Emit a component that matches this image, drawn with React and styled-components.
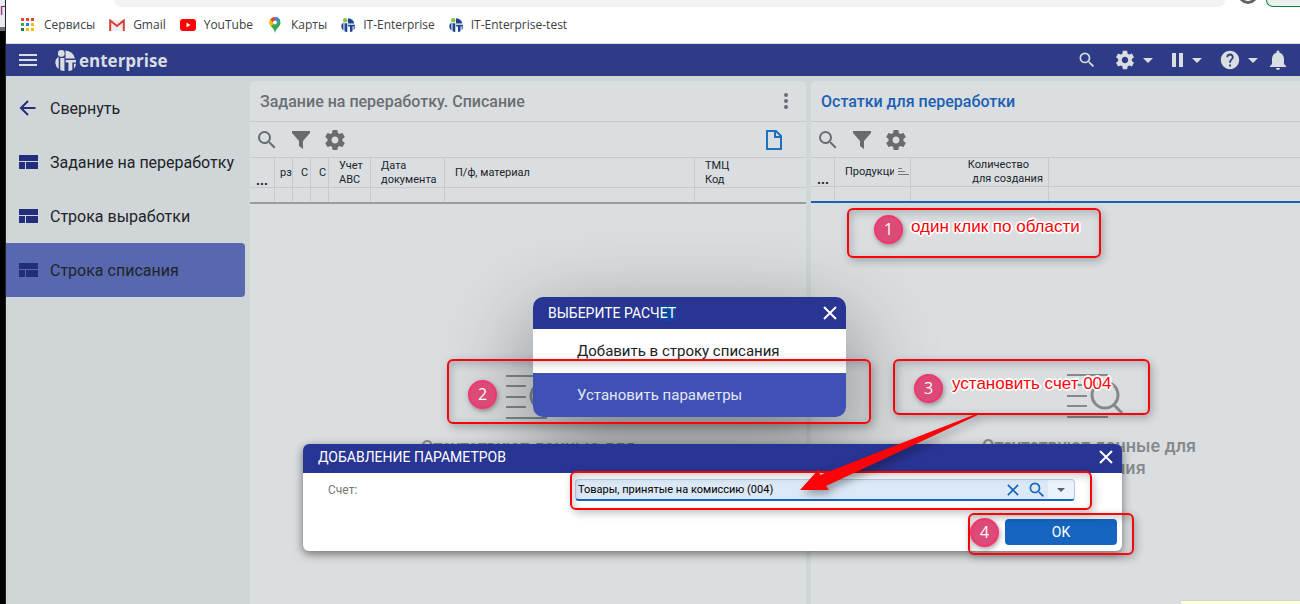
import React from "react";
import styled, { createGlobalStyle, css } from "styled-components";

const GlobalStyle = createGlobalStyle`
  * { box-sizing: border-box; }
  body { margin: 0; font-family: Roboto, "Liberation Sans", sans-serif; background: #d0d5d8; overflow: hidden; }
  button { font-family: inherit; border: 0; padding: 0; background: none; cursor: pointer; }
`;

const Screen = styled.div`
  position: relative;
  display: flex;
  min-height: 100vh;
  overflow: hidden;
`;

const DesktopEdge = styled.div`
  flex: none;
  width: 6px;
  background: #000;
  border-right: 1px solid #222;
`;

const DesktopWindow = styled.div`
  height: 31px;
  overflow: hidden;
  padding-top: 3px;
  background: #e8ebef;
  border-bottom: 4px solid #6b6b6b;
  font: 12px/16px "Liberation Sans", sans-serif;
  color: #7a1f7a;
`;

const BrowserWindow = styled.div`
  flex: 1;
  min-width: 0;
  display: flex;
  flex-direction: column;
`;

const AddressRow = styled.div`
  display: flex;
  height: 7px;
  background: #fff;
  padding-left: 108px;
  overflow: hidden;
`;

const AddressBar = styled.div`
  flex: 1;
  background: #f1f3f4;
  border-radius: 0 0 14px 14px;
`;

const Avatar = styled.div`
  width: 20px;
  height: 20px;
  margin: -16px 8px 0 13px;
  border: 3px solid #5f6368;
  border-radius: 50%;
`;

const UpdateChip = styled.div`
  width: 34px;
  border: 1px solid #188038;
  border-width: 0 0 1px 1px;
  border-radius: 0 0 0 14px;
  background: #e9f2ec;
`;

const Bookmarks = styled.nav`
  display: flex;
  gap: 14px;
  align-items: center;
  height: 37px;
  padding: 0 14px;
  background: #fff;
  border-bottom: 1px solid #dadce0;
`;

const Bookmark = styled.a`
  display: flex;
  align-items: center;
  gap: 8px;
  font: 12px/16px "Open Sans", sans-serif;
  color: #3c4043;
  text-decoration: none;
`;

const AppBar = styled.header`
  display: flex;
  align-items: center;
  height: 32px;
  padding: 0 14px 0 12px;
  background: #2e3b87;
  color: #dadee1;
`;

const IconButton = styled.button`
  display: flex;
  align-items: center;
  color: inherit;
`;

const MenuButton = styled(IconButton)`
  gap: 7px;
  padding-left: 5px;
`;

const Brand = styled.a`
  display: flex;
  align-items: center;
  gap: 3px;
  margin-left: 17px;
  color: inherit;
  text-decoration: none;
  font: 700 17px/24px "Open Sans", sans-serif;
`;

const BrandName = styled.span`
  padding-top: 2px;
`;

const AppActions = styled.div`
  display: flex;
  align-items: center;
  gap: 12px;
  margin-left: auto;
`;

const Body = styled.div`
  flex: 1;
  display: flex;
  padding-top: 5px;
  background: #d0d5d8;
  overflow: hidden;
`;

const Sidebar = styled.nav`
  flex: none;
  width: 244px;
  padding-right: 5px;
`;

const NavItem = styled.a`
  display: flex;
  align-items: center;
  gap: 12px;
  height: 54px;
  padding-left: 12px;
  border-radius: 0 4px 4px 0;
  font-size: 16px;
  line-height: 20px;
  white-space: nowrap;
  color: #202429;
  text-decoration: none;
  background: ${(p) => (p.$active ? "#5868af" : "none")};
`;

const NavLabel = styled.span`
  padding-top: 2px;
`;

const Panels = styled.main`
  flex: 1;
  display: flex;
  gap: 5px;
  margin-right: -67px;
`;

const Panel = styled.section`
  flex: 1;
  min-width: 0;
  display: flex;
  flex-direction: column;
  background: #dadee1;
  border-radius: 5px 5px 0 0;
`;

const PanelHead = styled.div`
  display: flex;
  align-items: center;
  justify-content: space-between;
  height: 41px;
  padding: 0 10px;
  border-bottom: 1px solid #c6cacd;
`;

const PanelTitle = styled.h2`
  margin: 0;
  padding-top: 2px;
  font-size: 16px;
  line-height: 20px;
  font-weight: 500;
  color: ${(p) => (p.$active ? "#1c60b2" : "#6a6f72")};
`;

const Toolbar = styled.div`
  display: flex;
  align-items: center;
  gap: 10px;
  height: 35px;
  padding: 0 24px 0 5px;
  color: #686c6f;
`;

const NewDocument = styled(IconButton)`
  margin-left: auto;
  color: #1e70c0;
`;

const Grid = styled.table`
  table-layout: fixed;
  width: 100%;
  border-collapse: separate;
  border-spacing: 0;
  border-bottom: 2px solid ${(p) => (p.$active ? "#1c60b2" : "#999d9f")};
`;

const cell = css`
  padding: 0;
  border-top: 1px solid #c6cacd;
  border-right: 1px solid #c6cacd;
  &:last-child { border-right: 0; }
`;

const HeadCell = styled.th`
  ${cell}
  height: ${(p) => (p.$low ? 29 : 30)}px;
  padding-top: ${(p) => (p.$low ? 0 : 1)}px;
  padding-left: ${(p) => p.$pad ?? 10}px;
  font-size: 11px;
  line-height: 14px;
  font-weight: 400;
  text-align: left;
  white-space: nowrap;
  overflow: hidden;
  color: #202429;
`;

const Dots = styled.b`
  display: block;
  padding-top: 14px;
  font-size: 14px;
`;

const SortLabel = styled.span`
  display: flex;
  align-items: center;
  gap: 3px;
`;

const ClippedText = styled.span`
  width: 49px;
  overflow: hidden;
`;

const Quantity = styled.span`
  display: block;
  padding-right: 5px;
  text-align: right;
`;

const QuantityTop = styled.span`
  display: block;
  padding-right: 14px;
`;

const FilterCell = styled.td`
  ${cell}
  height: 15px;
`;

const Empty = styled.div`
  display: flex;
  flex-direction: column;
  align-items: center;
  gap: 17px;
  padding-top: 171px;
  font-size: 18px;
  line-height: 22px;
  font-weight: 500;
  text-align: center;
  color: #85898b;
`;

const EmptyDrawing = styled.svg`
  overflow: visible;
`;

const Menu = styled.div`
  position: absolute;
  left: 533px;
  top: 297px;
  width: 313px;
  border-radius: 10px;
  box-shadow: 0 30px 90px rgba(0, 0, 0, 0.45);
`;

const DialogTitle = styled.header`
  display: flex;
  align-items: center;
  justify-content: space-between;
  height: ${(p) => p.$height}px;
  padding: 0 9px ${(p) => p.$lift ?? 0}px 15px;
  border-radius: ${(p) => p.$radius}px ${(p) => p.$radius}px 0 0;
  background: #283593;
  color: #fff;
  font-size: 14px;
  line-height: 18px;
`;

const Selected = styled.span`
  background: #0d47a1;
`;

const MenuItem = styled.button`
  display: block;
  width: 100%;
  height: 44px;
  padding-left: 44px;
  font-size: 15px;
  line-height: 20px;
  text-align: left;
  color: ${(p) => (p.$active ? "#e4e7f5" : "#202124")};
  background: ${(p) => (p.$active ? "#3f51b5" : "#fff")};
  border-radius: ${(p) => (p.$active ? "0 0 10px 10px" : "0")};
`;

const Dialog = styled.form`
  position: absolute;
  left: 303px;
  top: 444px;
  width: 819px;
  height: 107px;
  border-radius: 6px;
  background: #fff;
  box-shadow: 0 3px 10px rgba(0, 0, 0, 0.5);
`;

const Field = styled.div`
  display: flex;
  align-items: center;
  justify-content: space-between;
  height: 34px;
  padding: 0 47px 0 25px;
`;

const FieldLabel = styled.label`
  font-size: 12px;
  line-height: 16px;
  color: #757575;
`;

const Combo = styled.div`
  display: flex;
  align-items: center;
  width: 500px;
  height: 22px;
  border: 1px solid #b3cae6;
  border-bottom: 2px solid #1565c0;
  border-radius: 4px;
  background: #dbe8f6;
  color: #1565c0;
  overflow: hidden;
`;

const ComboInput = styled.input`
  flex: 1;
  min-width: 0;
  border: 0;
  outline: 0;
  padding: 0 2px;
  background: none;
  font: 11px/16px Roboto, "Liberation Sans", sans-serif;
  color: #000;
`;

const ComboTools = styled.div`
  display: flex;
  align-items: center;
  gap: 8px;
  padding-right: 1px;
`;

const ComboDrop = styled(IconButton)`
  width: 26px;
  height: 20px;
  justify-content: center;
  background: #eaf2fa;
  color: #616161;
`;

const Footer = styled.div`
  display: flex;
  justify-content: flex-end;
  padding: 12px 5px 0;
`;

const OkButton = styled.button`
  width: 112px;
  height: 26px;
  border-radius: 4px;
  background: #1565c0;
  color: #fff;
  font-size: 14px;
`;

const Callout = styled.div`
  position: absolute;
  left: ${(p) => p.$x}px;
  top: ${(p) => p.$y}px;
  width: ${(p) => p.$w}px;
  height: ${(p) => p.$h}px;
  border: 2px solid #fb0307;
  border-radius: 6px;
  box-shadow: 2px 3px 8px rgba(0, 0, 0, 0.25), inset 2px 3px 8px rgba(0, 0, 0, 0.2);
  pointer-events: none;
`;

const Badge = styled.span`
  position: absolute;
  left: ${(p) => p.$x}px;
  top: ${(p) => p.$y}px;
  width: 29px;
  height: 29px;
  border: 2px solid #f5356f;
  border-radius: 50%;
  background: #dc4a77;
  box-shadow: 1px 2px 5px rgba(0, 0, 0, 0.35);
  color: #fff;
  font: 16px/25px "Open Sans", sans-serif;
  text-align: center;
`;

const Note = styled.span`
  position: absolute;
  left: ${(p) => p.$x}px;
  top: ${(p) => p.$y}px;
  font: 17px/20px "Liberation Sans", sans-serif;
  white-space: nowrap;
  color: #fb0307;
  text-shadow: 2px 0 #fff, -2px 0 #fff, 0 2px #fff, 0 -2px #fff, 1px 1px #fff, -1px -1px #fff, 1px -1px #fff, -1px 1px #fff;
`;

const Arrow = styled.svg`
  position: absolute;
  left: 796px;
  top: 408px;
  filter: drop-shadow(3px 4px 4px rgba(0, 0, 0, 0.35));
  pointer-events: none;
`;

const Hint = styled.div`
  position: absolute;
  right: 0;
  bottom: 0;
  width: 119px;
  height: 4px;
  border-top: 1px solid #d5d5cb;
  background: #ffffe1;
`;

const Glyph = ({ size = 24, d }) => (
  <svg width={size} height={size} viewBox="0 0 24 24" fill="currentColor">
    <path d={d} />
  </svg>
);

const paths = {
  search: "M15.5 14h-.79l-.28-.27A6.471 6.471 0 0 0 16 9.5 6.5 6.5 0 1 0 9.5 16c1.61 0 3.09-.59 4.23-1.57l.27.28v.79l5 4.99L20.49 19l-4.99-5zm-6 0C7.01 14 5 11.99 5 9.5S7.01 5 9.5 5 14 7.01 14 9.5 11.99 14 9.5 14z",
  gear: "M19.43 12.98c.04-.32.07-.64.07-.98s-.03-.66-.07-.98l2.11-1.65c.19-.15.24-.42.12-.64l-2-3.46c-.12-.22-.39-.3-.61-.22l-2.49 1c-.52-.4-1.08-.73-1.69-.98l-.38-2.65A.488.488 0 0 0 14 2h-4c-.25 0-.46.18-.49.42l-.38 2.65c-.61.25-1.17.59-1.69.98l-2.49-1c-.23-.09-.49 0-.61.22l-2 3.46c-.13.22-.07.49.12.64l2.11 1.65c-.04.32-.07.65-.07.98s.03.66.07.98l-2.11 1.65c-.19.15-.24.42-.12.64l2 3.46c.12.22.39.3.61.22l2.49-1c.52.4 1.08.73 1.69.98l.38 2.65c.03.24.24.42.49.42h4c.25 0 .46-.18.49-.42l.38-2.65c.61-.25 1.17-.59 1.69-.98l2.49 1c.23.09.49 0 .61-.22l2-3.46c.12-.22.07-.49-.12-.64l-2.11-1.65zM12 15.5c-1.93 0-3.5-1.57-3.5-3.5s1.57-3.5 3.5-3.5 3.5 1.57 3.5 3.5-1.57 3.5-3.5 3.5z",
  filter: "M3 3h18v2l-7 8v8l-4-3v-5L3 5z",
  help: "M12 2C6.48 2 2 6.48 2 12s4.48 10 10 10 10-4.48 10-10S17.52 2 12 2zm1 17h-2v-2h2v2zm2.07-7.75l-.9.92C13.45 12.9 13 13.5 13 15h-2v-.5c0-1.1.45-2.1 1.17-2.83l1.24-1.26c.37-.36.59-.86.59-1.41 0-1.1-.9-2-2-2s-2 .9-2 2H8c0-2.21 1.79-4 4-4s4 1.79 4 4c0 .88-.36 1.68-.93 2.25z",
  bell: "M12 22c1.1 0 2-.9 2-2h-4c0 1.1.89 2 2 2zm6-6v-5c0-3.07-1.64-5.64-4.5-6.32V4c0-.83-.67-1.5-1.5-1.5s-1.5.67-1.5 1.5v.68C7.63 5.36 6 7.92 6 11v5l-2 2v1h16v-1l-2-2z",
};

const Caret = ({ w = 10 }) => (
  <svg width={w} height={w / 2} viewBox="0 0 10 5" fill="currentColor"><path d="M0 0h10L5 5z" /></svg>
);

const Cross = ({ size = 14 }) => (
  <svg width={size} height={size} viewBox="0 0 14 14" stroke="currentColor" strokeWidth="2" fill="none">
    <path d="M1 1l12 12M13 1L1 13" />
  </svg>
);

const Mark = ({ size, dot, fill }) => (
  <svg width={size} height={size} viewBox="0 0 20 20">
    <g fill={fill}>
      <path d="M10 .5A9.500 9.500 0 0 1 19 8H10z" />
      <path d="M3.500 6.500V18Q.8 16 .4 12.500Q0 8.500 3.500 6.500z" />
      <path d="M5 7.500h4V20Q6.500 20 5 19z" />
      <path d="M10.200 9.500H20V12H16.500V19Q15 20 12.800 20V12H10.200z" />
      <path d="M18 13h2q-.3 3-2 4.500z" />
    </g>
    <circle cx="6" cy="3.300" r="3.200" fill={dot} />
  </svg>
);

const AppsIcon = () => {
  const colors = ["#ea4335", "#ea4335", "#ea4335", "#34a853", "#1a84e8", "#fbbc04", "#188038", "#fbbc04", "#fbbc04"];
  return (
    <svg width="16" height="14" viewBox="0 0 16 14">
      {colors.map((c, i) => <rect key={i} x={1 + (i % 3) * 5} y={Math.floor(i / 3) * 5} width="3" height="3" fill={c} />)}
    </svg>
  );
};

const GmailIcon = () => (
  <svg width="16" height="12" viewBox="0 0 16 12">
    <rect x="1" y="1" width="14" height="11" fill="#eceff1" />
    <path d="M1.200 12V1.500L8 7l6.800-5.500V12" fill="none" stroke="#d93f34" strokeWidth="2" />
  </svg>
);

const YouTubeIcon = () => (
  <svg width="16" height="12" viewBox="0 0 16 12">
    <rect width="16" height="12" rx="3" fill="#f00" /><path d="M6.500 3.500L10.500 6l-4 2.500z" fill="#fff" />
  </svg>
);

const MapsIcon = () => (
  <svg width="16" height="16" viewBox="0 0 16 16">
    <path d="M2.500 5.500a5.500 5.500 0 0 1 11 0C13.500 10 9.500 10 8 16 7 10 2.500 10 2.500 5.500z" fill="#34a853" />
    <path d="M2.500 5.500A5.500 5.500 0 0 1 8 0v5.500L4 9.500Q2.500 8 2.500 5.500z" fill="#fbbc04" />
    <path d="M3.500 2.500A5.500 5.500 0 0 1 8 0v5L6 5.500z" fill="#ea4335" />
    <path d="M8 0a5.500 5.500 0 0 1 5 3L8 6z" fill="#4285f4" />
    <circle cx="8" cy="5.500" r="2" fill="#fff" />
  </svg>
);

const TileIcon = () => (
  <svg width="20" height="14" viewBox="0 0 20 14" fill="#222d7c">
    <path d="M1 0h19v6H1zM1 7h6v7H1zM8 7h12v7H8z" />
  </svg>
);

const BackIcon = () => (
  <svg width="20" height="16" viewBox="0 0 20 16" fill="none" stroke="#222d7c" strokeWidth="2">
    <path d="M17.500 8H3M10 1L3 8l7 7" />
  </svg>
);

const DocIcon = () => (
  <svg width="16" height="20" viewBox="0 0 16 20" fill="none" stroke="currentColor" strokeWidth="2">
    <path d="M1 1h9l5 5v13H1zM9 1v6h6" />
  </svg>
);

const EmptyIcon = () => (
  <EmptyDrawing width="46" height="44" viewBox="0 0 46 44" fill="none" stroke="currentColor" strokeWidth="2">
    <path d="M1 1h41M1 11h20M1 22h20M1 32h20M1 43h41" />
    <circle cx="39" cy="21" r="13" strokeWidth="3" /><path d="M48 31l8 8" strokeWidth="3" />
  </EmptyDrawing>
);

const PanelToolbar = () => (
  <Toolbar>
    <IconButton aria-label="Поиск"><Glyph d={paths.search} /></IconButton>
    <IconButton aria-label="Фильтр"><Glyph d={paths.filter} /></IconButton>
    <IconButton aria-label="Настройки"><Glyph d={paths.gear} /></IconButton>
    <NewDocument aria-label="Создать"><DocIcon /></NewDocument>
  </Toolbar>
);

const EmptyState = () => (
  <Empty><EmptyIcon /><div>Отсутствуют данные для<br />отображения</div></Empty>
);

const bookmarks = [
  ["Сервисы", <AppsIcon />],
  ["Gmail", <GmailIcon />],
  ["YouTube", <YouTubeIcon />],
  ["Карты", <MapsIcon />],
  ["IT-Enterprise", <Mark size={14} dot="#8bc34a" fill="#1f4590" />],
  ["IT-Enterprise-test", <Mark size={14} dot="#8bc34a" fill="#1f4590" />],
];

const navItems = ["Задание на переработку", "Строка выработки", "Строка списания"];

const WriteOffGrid = () => (
  <Grid>
    <colgroup>{[25, 18, 18, 18, 42, 74, 250].map((w, i) => <col key={i} width={w} />)}<col /></colgroup>
    <thead>
      <tr>
        <HeadCell $pad={6}><Dots>...</Dots></HeadCell>
        <HeadCell $pad={5}>рз</HeadCell>
        <HeadCell $pad={8}>С</HeadCell>
        <HeadCell $pad={8}>С</HeadCell>
        <HeadCell>Учет<br />ABC</HeadCell>
        <HeadCell>Дата<br />документа</HeadCell>
        <HeadCell>П/ф, материал</HeadCell>
        <HeadCell>ТМЦ<br />Код</HeadCell>
      </tr>
    </thead>
    <tbody><tr>{Array.from({ length: 8 }, (_, i) => <FilterCell key={i} />)}</tr></tbody>
  </Grid>
);

const StockGrid = () => (
  <Grid $active>
    <colgroup>{[24, 76, 138].map((w, i) => <col key={i} width={w} />)}<col /></colgroup>
    <thead>
      <tr>
        <HeadCell $low $pad={6}><Dots>...</Dots></HeadCell>
        <HeadCell $low>
          <SortLabel>
            <ClippedText>Продукция</ClippedText>
            <svg width="12" height="8" viewBox="0 0 12 8" stroke="#777b7e"><path d="M1 .5h4M1 3.500h7M1 6.500h11" /></svg>
          </SortLabel>
        </HeadCell>
        <HeadCell $low><Quantity><QuantityTop>Количество</QuantityTop>для создания</Quantity></HeadCell>
        <HeadCell $low />
      </tr>
    </thead>
    <tbody><tr>{Array.from({ length: 4 }, (_, i) => <FilterCell key={i} />)}</tr></tbody>
  </Grid>
);

export default function App() {
  return (
    <Screen>
      <GlobalStyle />
      <DesktopEdge><DesktopWindow>П</DesktopWindow></DesktopEdge>
      <BrowserWindow>
        <AddressRow><AddressBar /><Avatar /><UpdateChip /></AddressRow>
        <Bookmarks>
          {bookmarks.map(([name, icon]) => <Bookmark key={name} href="#">{icon}{name}</Bookmark>)}
        </Bookmarks>
        <AppBar>
          <IconButton aria-label="Меню">
            <svg width="20" height="14" viewBox="0 0 20 14" stroke="currentColor" strokeWidth="2"><path d="M1 2h18M1 7h18M1 12h18" /></svg>
          </IconButton>
          <Brand href="#"><Mark size={21} dot="#dadee1" fill="#dadee1" /><BrandName>enterprise</BrandName></Brand>
          <AppActions>
            <IconButton aria-label="Поиск"><Glyph size={20} d={paths.search} /></IconButton>
            <MenuButton aria-label="Настройки"><Glyph size={22} d={paths.gear} /><Caret /></MenuButton>
            <MenuButton aria-label="Пауза">
              <svg width="15" height="14" viewBox="0 0 15 14" fill="currentColor"><path d="M2 0h4v14H2zM9 0h4v14H9z" /></svg><Caret />
            </MenuButton>
            <MenuButton aria-label="Справка"><Glyph size={22} d={paths.help} /><Caret /></MenuButton>
            <IconButton aria-label="Уведомления">
              <svg width="16" height="22" viewBox="4 1 16 22" fill="currentColor"><path d={paths.bell} /></svg>
            </IconButton>
          </AppActions>
        </AppBar>
        <Body>
          <Sidebar>
            <NavItem href="#"><BackIcon /><NavLabel>Свернуть</NavLabel></NavItem>
            {navItems.map((name, i) => (
              <NavItem key={name} href="#" $active={i === 2}><TileIcon /><NavLabel>{name}</NavLabel></NavItem>
            ))}
          </Sidebar>
          <Panels>
            <Panel>
              <PanelHead>
                <PanelTitle>Задание на переработку. Списание</PanelTitle>
                <IconButton aria-label="Ещё">
                  <svg width="20" height="18" viewBox="0 0 20 18" fill="#686c6f"><circle cx="10" cy="3" r="2" /><circle cx="10" cy="9" r="2" /><circle cx="10" cy="15" r="2" /></svg>
                </IconButton>
              </PanelHead>
              <PanelToolbar />
              <WriteOffGrid />
              <EmptyState />
            </Panel>
            <Panel>
              <PanelHead><PanelTitle $active>Остатки для переработки</PanelTitle></PanelHead>
              <PanelToolbar />
              <StockGrid />
              <EmptyState />
            </Panel>
          </Panels>
        </Body>
      </BrowserWindow>

      <Menu>
        <DialogTitle $height={32} $radius={10}>
          <span>ВЫБЕРИТЕ РАСЧ<Selected>ЕТ</Selected></span>
          <IconButton aria-label="Закрыть"><Cross /></IconButton>
        </DialogTitle>
        <MenuItem>Добавить в строку списания</MenuItem>
        <MenuItem $active>Установить параметры</MenuItem>
      </Menu>

      <Dialog>
        <DialogTitle $height={29} $radius={6} $lift={3}>
          <span>ДОБАВЛЕНИЕ ПАРАМЕТРОВ</span>
          <IconButton type="button" aria-label="Закрыть"><Cross /></IconButton>
        </DialogTitle>
        <Field>
          <FieldLabel htmlFor="account">Счет:</FieldLabel>
          <Combo>
            <ComboInput id="account" defaultValue="Товары, принятые на комиссию (004)" />
            <ComboTools>
              <IconButton type="button" aria-label="Очистить"><Cross size={12} /></IconButton>
              <IconButton type="button" aria-label="Поиск"><Glyph size={20} d={paths.search} /></IconButton>
            </ComboTools>
            <ComboDrop type="button" aria-label="Список"><Caret w={8} /></ComboDrop>
          </Combo>
        </Field>
        <Footer><OkButton type="button">OK</OkButton></Footer>
      </Dialog>

      <Callout $x={847} $y={208} $w={254} $h={50} />
      <Callout $x={447} $y={359} $w={424} $h={65} />
      <Callout $x={893} $y={359} $w={257} $h={56} />
      <Callout $x={570} $y={471} $w={522} $h={39} />
      <Callout $x={968} $y={513} $w={166} $h={42} />
      <Badge $x={874} $y={215}>1</Badge>
      <Badge $x={468} $y={380}>2</Badge>
      <Badge $x={914} $y={374}>3</Badge>
      <Badge $x={970} $y={518}>4</Badge>
      <Note $x={911} $y={217}>один клик по области</Note>
      <Note $x={952} $y={374}>установить счет 004</Note>
      <Arrow width="190" height="90" viewBox="0 0 190 90">
        <path d="M180 6L24 67 23 61 4 82 33 82 30 78 184 6z" fill="#fb0307" />
      </Arrow>
      <Hint />
    </Screen>
  );
}
